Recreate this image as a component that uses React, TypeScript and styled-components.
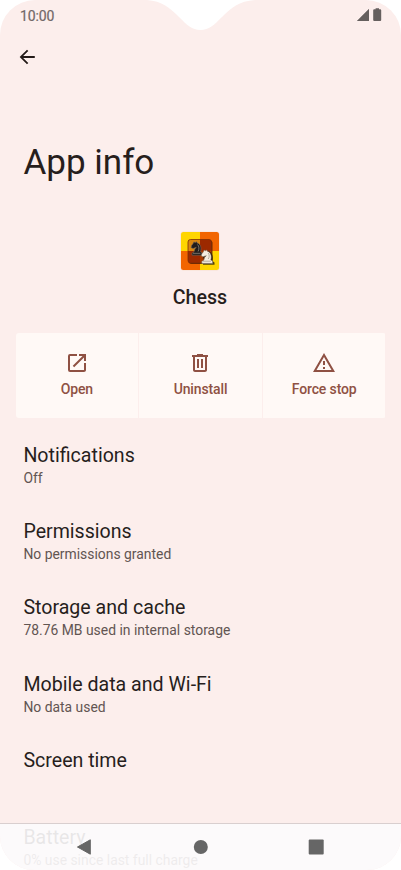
import React from "react";
import styled, { createGlobalStyle } from "styled-components";

const GlobalStyle = createGlobalStyle`
  *, *::before, *::after { box-sizing: border-box; }
  html, body { margin: 0; padding: 0; background: #ffffff; overflow: hidden; }
  body { font-family: Roboto, "Liberation Sans", sans-serif; color: #271e1c; }
  svg { display: block; }
`;

const Screen = styled.div`
  position: relative;
  display: flex;
  flex-direction: column;
  width: 401px;
  height: 870px;
  overflow: hidden;
  border-radius: 35px 35px 34px 34px;
  background: #fceeec;
`;

const Notch = styled.svg`
  position: absolute;
  top: 0;
  left: 140px;
`;

const StatusBar = styled.header`
  display: flex;
  flex: none;
  align-items: center;
  justify-content: space-between;
  height: 32px;
  padding: 0 19px 0 20px;
`;

const Clock = styled.span`
  font-size: 14px;
  font-weight: 400;
  line-height: 20px;
  letter-spacing: -0.1px;
  color: #716867;
  -webkit-text-stroke: 0.2px #716867;
`;

const StatusIcons = styled.svg`
  margin-top: -2px;
`;

const AppBar = styled.nav`
  display: flex;
  flex: none;
  align-items: center;
  height: 50px;
  padding-left: 16px;
`;

const PageTitle = styled.h1`
  flex: none;
  margin: 57px 0 0 23.5px;
  font-size: 35px;
  font-weight: 400;
  line-height: 48px;
`;

const AppSummary = styled.section`
  display: flex;
  flex: none;
  flex-direction: column;
  align-items: center;
  margin-top: 44px;
  padding-right: 1px;
`;

const AppName = styled.h2`
  margin: 14px 0 0;
  font-size: 19.6px;
  font-weight: 500;
  line-height: 26px;
`;

const Actions = styled.section`
  display: grid;
  flex: none;
  grid-template-columns: repeat(3, 1fr);
  gap: 1px;
  height: 85px;
  margin: 21.5px 15.5px 0;
  overflow: hidden;
  border-radius: 3px;
`;

const ActionButton = styled.button`
  display: flex;
  flex-direction: column;
  align-items: center;
  padding: 18.5px 0 0;
  gap: 5px;
  border: 0;
  background: #fff9f6;
  color: #8f5143;
  font: 500 14px/18px Roboto, "Liberation Sans", sans-serif;
  letter-spacing: -0.13px;
`;

const Settings = styled.main`
  display: flex;
  flex-direction: column;
  gap: 30.4px;
  margin: 25.2px 0 0 23.4px;
`;

const SettingRow = styled.div`
  flex: none;
  height: 46px;
`;

const SettingTitle = styled.div`
  font-size: 19.6px;
  line-height: 26px;
`;

const SettingDetail = styled.div`
  margin-top: -1px;
  font-size: 13.9px;
  line-height: 20px;
  color: #625552;
`;

const NavigationBar = styled.footer`
  position: absolute;
  right: 0;
  bottom: 0;
  left: 0;
  display: flex;
  height: 47px;
  border-top: 1px solid #d9cfcf;
  background: rgba(252, 251, 252, 0.91);
`;

const NavigationIcons = styled.div`
  display: grid;
  grid-template-columns: 16px 16px 16px;
  column-gap: 100px;
  align-items: center;
  height: 46px;
  margin-left: 76px;
`;

const actions = [
  {
    label: "Open",
    path: "M19 19H5V5h7V3H5a2 2 0 0 0-2 2v14a2 2 0 0 0 2 2h14c1.1 0 2-.9 2-2v-7h-2v7zM14 3v2h3.59l-9.83 9.83 1.41 1.41L19 6.41V10h2V3h-7z",
  },
  {
    label: "Uninstall",
    path: "M15 4V3H9v1H4v2h1v13c0 1.1.9 2 2 2h10c1.1 0 2-.9 2-2V6h1V4h-5zm2 15H7V6h10v13zM9 8h2v9H9V8zm4 0h2v9h-2V8z",
  },
  {
    label: "Force stop",
    path: "M12 5.99 19.53 19H4.47L12 5.99M12 2 1 21h22L12 2zm1 14h-2v2h2v-2zm0-6h-2v4h2v-4z",
  },
];

const settings = [
  { title: "Notifications", detail: "Off" },
  { title: "Permissions", detail: "No permissions granted" },
  { title: "Storage and cache", detail: "78.76 MB used in internal storage" },
  { title: "Mobile data and Wi-Fi", detail: "No data used" },
  { title: "Screen time", detail: "" },
  { title: "Battery", detail: "0% use since last full charge" },
];

function ChessIcon() {
  return (
    <svg width="40" height="40" viewBox="0 0 40 40">
      <defs>
        <clipPath id="tile"><rect x="1" y="1" width="38" height="38" rx="2.5" /></clipPath>
        <clipPath id="board"><rect x="8" y="8.5" width="23.5" height="23.5" rx="2.5" /></clipPath>
      </defs>
      <rect x="0.4" y="0.4" width="39.2" height="39.2" rx="3" fill="#f8dfcf" />
      <g clipPath="url(#tile)">
        <path fill="#ffd500" d="M0 0h20v20H0zM20 20h20v20H20z" />
        <path fill="#f26500" d="M20 0h20v20H20zM0 20h20v20H0z" />
      </g>
      <rect x="9" y="9.5" width="23.5" height="23.5" rx="2.5" fill="#401500" opacity=".75" />
      <g clipPath="url(#board)">
        <path fill="#db8710" d="M8 8h12v12H8z" />
        <path fill="#9c2900" d="M20 8h12v12H20zM8 20h12v12H8z" />
        <path fill="#a93b00" d="M20 20h12v12H20z" />
      </g>
      <rect x="8" y="8.5" width="23.5" height="23.5" rx="2.5" fill="none" stroke="#7b2d05" strokeWidth=".8" />
      <path fill="#211c1b" stroke="#70665e" strokeWidth=".6" d="M12 24.2v-2.1l2-1.2.8-2.7 1.5-2-3.1 1.3-2.1-.8.5-2.1 1.5-2.1.7-1.6 1.5.5 1.4-.7.4 1.2c3.5 1 4.6 4.8 3.4 8.9l1.5 1.1v2.3z" />
      <path d="M17.4 13.5c2 1.5 1.8 5 .7 7M13 22.3h7.5" fill="none" stroke="#a09789" strokeWidth=".7" />
      <path fill="#1c160e" opacity=".75" d="M23 33.7v-2.3l2-1.5 1.2-3.2-3.4 1 1-4.5 4.5-3.2c4.5 1.6 5.2 6.2 4.2 10l2 1.5v2.2z" />
      <path fill="#f5eee0" stroke="#716655" strokeWidth=".5" d="M21.8 32.4v-2.1l2-1.1.8-2.7 1.7-1.8-3.3 1-1.7-.8.4-2 1.6-2 .8-1.8 1.4.6 1.4-.8.4 1.3c3.5 1 4.6 4.7 3.5 8.7l1.8 1.2v2.3z" />
      <path d="M23 30.2h8M28.2 22c1.6 2 1 4.5 0 6" fill="none" stroke="#9b9180" strokeWidth=".7" />
    </svg>
  );
}

export default function App() {
  return (
    <>
      <GlobalStyle />
      <Screen>
        <Notch width="122" height="31" viewBox="0 0 122 31">
          <path fill="#fff" d="M7 0C22 1 30 8 39 17c8 8 13 13 21.5 13S74 25 82 17C91 8 99 1 115 0z" />
        </Notch>
        <StatusBar>
          <Clock>10:00</Clock>
          <StatusIcons width="26" height="14" viewBox="0 0 26 14">
            <path fill="#655f5e" d="M.8 13H13V.8zM19.6.2h3.4v1h1.2q1 0 1 1v9.8q0 1-1 1h-6q-1 0-1-1V2.2q0-1 1-1h1.4z" />
          </StatusIcons>
        </StatusBar>
        <AppBar>
          <svg width="22" height="22" viewBox="0 0 24 24">
            <path fill="#231a18" d="M20.5 11H7.83l5.59-5.59L12 4l-8 8 8 8 1.41-1.41L7.83 13H20.5z" />
          </svg>
        </AppBar>
        <PageTitle>App info</PageTitle>
        <AppSummary>
          <ChessIcon />
          <AppName>Chess</AppName>
        </AppSummary>
        <Actions>
          {actions.map(({ label, path }) => (
            <ActionButton key={label}>
              <svg width="24" height="24" viewBox="0 0 24 24"><path fill="currentColor" d={path} /></svg>
              {label}
            </ActionButton>
          ))}
        </Actions>
        <Settings>
          {settings.map(({ title, detail }) => (
            <SettingRow key={title}>
              <SettingTitle>{title}</SettingTitle>
              <SettingDetail>{detail}</SettingDetail>
            </SettingRow>
          ))}
        </Settings>
        <NavigationBar>
          <NavigationIcons>
            <svg width="16" height="16" viewBox="0 0 16 16"><path fill="#666" stroke="#666" strokeLinejoin="round" d="M1.5 8 14.3.8v14.4z" /></svg>
            <svg width="16" height="16" viewBox="0 0 16 16"><circle cx="8.8" cy="8" r="7" fill="#666" /></svg>
            <svg width="16" height="16" viewBox="0 0 16 16"><rect x=".7" y=".5" width="15" height="15" rx="1" fill="#666" /></svg>
          </NavigationIcons>
        </NavigationBar>
      </Screen>
    </>
  );
}
